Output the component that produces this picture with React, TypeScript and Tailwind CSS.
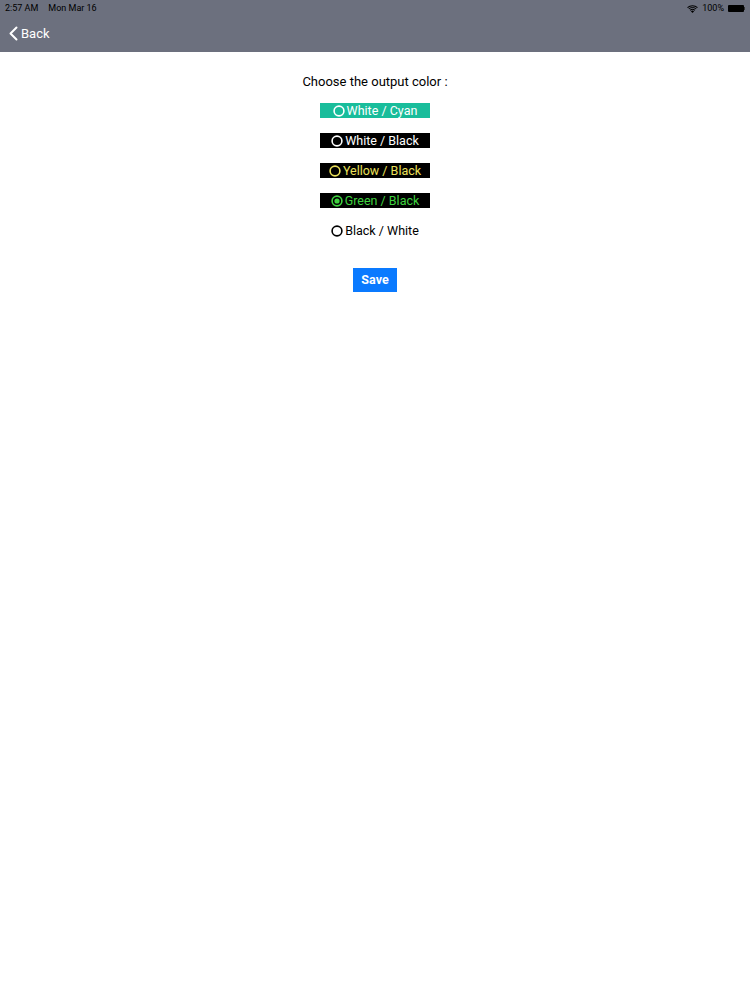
import React, { useState } from "react"

const options = [
  { id: "white-cyan", label: "White / Cyan", box: "bg-[#19bd9b] text-white" },
  { id: "white-black", label: "White / Black", box: "bg-black text-white" },
  { id: "yellow-black", label: "Yellow / Black", box: "bg-black text-[#ebe05a]" },
  { id: "green-black", label: "Green / Black", box: "bg-black text-[#3fd23f]" },
  { id: "black-white", label: "Black / White", box: "bg-white text-black" },
]

// radio circle drawn in svg so the 1.5px ring stays crisp
const Radio = ({ checked }: { checked: boolean }) => (
  <svg width="12" height="12" viewBox="0 0 12 12" className="shrink-0">
    <circle cx="6" cy="6" r="4.9" fill="none" stroke="currentColor" strokeWidth="1.6" />
    {checked && <circle cx="6" cy="6" r="2.6" fill="currentColor" />}
  </svg>
)

const App = () => {
  const [selected, setSelected] = useState("green-black")

  return (
    <div className="min-h-screen bg-white font-['Roboto',sans-serif]">
      {/* Header */}
      <div className="h-[52px] bg-[#6c707e] text-white">
        <div className="flex h-[16px] items-center justify-between px-[5px] pt-[1px] text-[9px] text-black">
          <div className="flex gap-[10px]">
            <span>2:57 AM</span>
            <span>Mon Mar 16</span>
          </div>
          <div className="flex items-center gap-[4px]">
            <svg width="11" height="8" viewBox="0 0 12 9" fill="black">
              <path d="M6 9 L4.2 7 A2.6 2.6 0 0 1 7.8 7 Z" />
              <path d="M2.9 5.6 A4.6 4.6 0 0 1 9.1 5.6 L8.3 6.4 A3.4 3.4 0 0 0 3.7 6.4 Z" />
              <path d="M1.4 4.1 A6.8 6.8 0 0 1 10.6 4.1 L9.8 4.9 A5.6 5.6 0 0 0 2.2 4.9 Z" />
              <path d="M0 2.6 A8.9 8.9 0 0 1 12 2.6 L11.2 3.4 A7.8 7.8 0 0 0 0.8 3.4 Z" />
            </svg>
            <span>100%</span>
            <span className="flex items-center">
              <span className="h-[7px] w-[16px] rounded-[1px] bg-black" />
              <span className="h-[3px] w-[1px] bg-[#333]" />
            </span>
          </div>
        </div>
        <button className="mt-[8px] flex items-center gap-[3px] pl-[9px] text-[13px]">
          <svg width="9" height="15" viewBox="0 0 9 15" fill="none" stroke="white" strokeWidth="2" strokeLinecap="round" strokeLinejoin="round">
            <path d="M7.5 1.5 L1.5 7.5 L7.5 13.5" />
          </svg>
          <span>Back</span>
        </button>
      </div>

      {/* Content */}
      <div className="flex flex-col items-center pt-[22px]">
        <p className="text-[13px] leading-[15px] text-black">Choose the output color :</p>
        <div className="mt-[14px] flex flex-col gap-[15px]">
          {options.map((o) => (
            <button
              key={o.id}
              onClick={() => setSelected(o.id)}
              className={`flex h-[15px] w-[110px] items-center justify-center gap-[2px] text-[12.5px] leading-[15px] ${o.box}`}
            >
              <Radio checked={selected === o.id} />
              <span>{o.label}</span>
            </button>
          ))}
        </div>
        <button className="mt-[30px] h-[24px] w-[44px] bg-[#0a7aff] text-[12.5px] font-bold text-white">
          Save
        </button>
      </div>
    </div>
  )
}

export default App
